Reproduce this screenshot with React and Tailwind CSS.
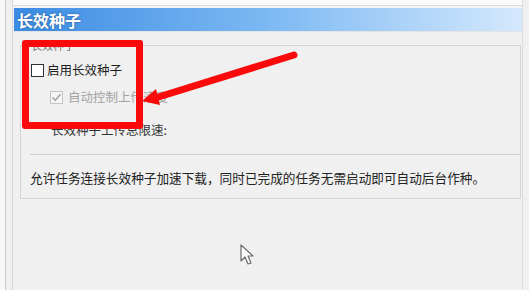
export default function App() {
  return (
    <div
      className="relative flex h-[290px] w-[529px] overflow-hidden bg-[#f0f0f0] font-['Noto_Sans_CJK_SC',sans-serif]"
    >
      {/* window left edge */}
      <div className="w-[5px] bg-[#f8f8f8]" />
      <div className="w-px bg-[#cdcdcd]" />
      <div className="w-[6px] bg-[#f0f0f0]" />
      <div className="w-px bg-[#d6d6d6]" />

      {/* main area */}
      <div className="flex flex-1 flex-col">
        <div className="h-[5px] bg-[#fafafa]" />
        <div className="h-px bg-[#dadada]" />
        <div className="h-[2px] bg-[#f5f5f5]" />
        {/* title bar */}
        <div className="ml-px flex h-[23px] items-center bg-gradient-to-r from-[#3a8be2] via-[#7cb9f3] to-[#d4e8fc] pl-[3px]">
          <span className="text-[16px] font-bold leading-none text-white [text-shadow:0_0_2px_#1d4f8a]">
            长效种子
          </span>
        </div>
        <div className="h-px bg-[#e4e4e4]" />

        {/* group box */}
        <fieldset className="ml-[7px] mr-px mt-[6px] h-[161px] border border-[#d5d5d5] px-0 pb-0 pt-0">
          <legend className="ml-[9px] px-px text-[11px] leading-[14px] text-[#6e6e6e]">长效种子</legend>
          <div className="flex flex-col text-[12.5px] leading-none text-[#1f1f1f]">
            <div className="ml-[10px] mt-[12px] flex items-center gap-[3px]">
              <span className="h-[13px] w-[13px] border border-[#333333] bg-white" />
              <span>启用长效种子</span>
            </div>
            <div className="ml-[29px] mt-[14px] flex items-center gap-[5px] text-[#a2a2a2]">
              <span className="flex h-[13px] w-[13px] items-center justify-center border border-[#c4c4c4] bg-[#f6f6f6]">
                <svg width="11" height="11" viewBox="0 0 11 11">
                  <path d="M1.5 5.5 L4.3 8.3 L9.5 2.3" fill="none" stroke="#a8a8a8" strokeWidth="1.6" />
                </svg>
              </span>
              <span>自动控制上传速度</span>
            </div>
            <div className="ml-[30px] mt-[20px] text-[#333333]">长效种子上传总限速:</div>
            <div className="ml-[9px] mt-[17px] h-px bg-[#cfcfcf]" />
            <div className="ml-[9px] mt-[17px] text-[12.65px] text-[#222222]">
              允许任务连接长效种子加速下载，同时已完成的任务无需启动即可自动后台作种。
            </div>
          </div>
        </fieldset>
      </div>

      {/* window right edge */}
      <div className="w-px bg-[#dedede]" />
      <div className="w-[6px] bg-[#f0f0f0]" />

      {/* red annotation box */}
      <div className="absolute left-[22px] top-[40px] h-[89px] w-[121px] rounded-[3px] border-[7px] border-[#fa0a0a]" />

      {/* red arrow + mouse cursor */}
      <svg className="absolute left-0 top-0" width="529" height="290" viewBox="0 0 529 290">
        <line x1="294" y1="55" x2="152" y2="99" stroke="#fa0a0a" strokeWidth="7" strokeLinecap="round" />
        <polygon points="142,101 156,89 160,105" fill="#fa0a0a" />
        <path
          d="M241 245 L241 261 L245 257 L248 264 L251 263 L248 256 L253 256 Z"
          fill="#ffffff"
          stroke="#6b6b6b"
          strokeWidth="1.2"
          strokeLinejoin="round"
        />
      </svg>
    </div>
  );
}
